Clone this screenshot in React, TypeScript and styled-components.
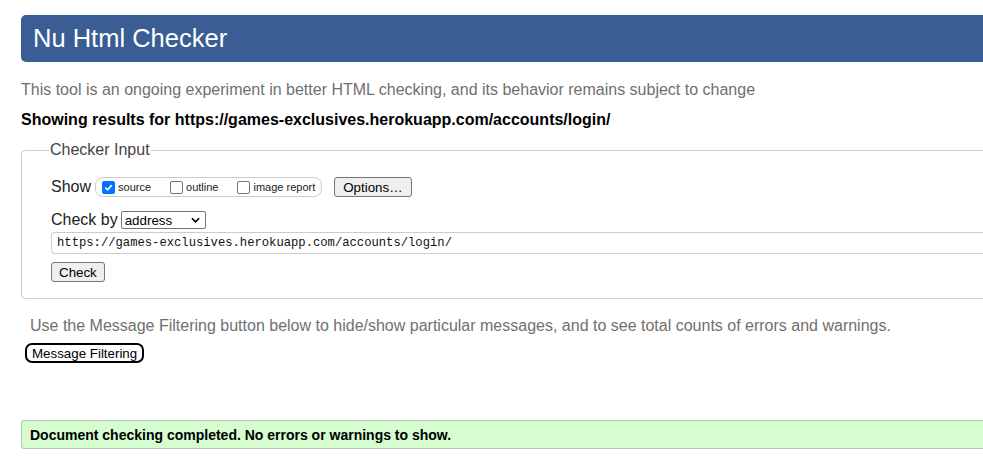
import styled, { createGlobalStyle } from 'styled-components';

const GlobalStyle = createGlobalStyle`
    html, body {
        margin: 0;
        padding: 0;
        background: #ffffff;
        overflow: hidden;
    }
    body {
        font-family: "Liberation Sans", Arial, sans-serif;
        color: #000000;
    }
`;

const Page = styled.main`
    width: 1100px;
    padding: 15px 0 0 21px;
`;

const Header = styled.h1`
    margin: 0;
    height: 47px;
    display: flex;
    align-items: center;
    padding-left: 12px;
    background: #3a5d93;
    border-radius: 5px;
    color: #ffffff;
    font-size: 25.5px;
    font-weight: normal;
`;

const Intro = styled.p`
    margin: 18px 0 0;
    font-size: 16px;
    line-height: 20px;
    color: #707070;
`;

const Results = styled.p`
    margin: 10px 0 0;
    font-size: 16px;
    line-height: 20px;
    font-weight: bold;
`;

const Fieldset = styled.fieldset`
    margin: 11px 0 0;
    padding: 6px 0 16px 29px;
    border: 1px solid #cccccc;
    border-radius: 4px;
    min-width: 0;
`;

const Legend = styled.legend`
    margin-left: -2px;
    padding: 0 1px;
    font-size: 16px;
    color: #444444;
`;

const Row = styled.div<{ $gap?: number; $top?: number; $height: number }>`
    display: flex;
    align-items: center;
    height: ${(p) => p.$height}px;
    gap: ${(p) => p.$gap ?? 4}px;
    margin-top: ${(p) => p.$top ?? 0}px;
`;

const Label = styled.span`
    font-size: 16px;
    color: #222222;
`;

const Group = styled.div`
    display: flex;
    align-items: center;
    height: 18px;
    padding: 0 6px;
    border: 1px solid #cccccc;
    border-radius: 8px;
    margin-left: 1px;
`;

const Option = styled.label`
    display: flex;
    align-items: center;
    font-size: 11px;
    color: #222222;
    margin-right: 19px;
    &:last-child {
        margin-right: 0;
    }
`;

const Box = styled.span<{ $checked?: boolean }>`
    width: 11px;
    height: 11px;
    border: 1px solid ${(p) => (p.$checked ? '#0075ff' : '#767676')};
    background: ${(p) => (p.$checked ? '#0075ff' : '#ffffff')};
    border-radius: 2px;
    margin-right: 3px;
    display: flex;
    align-items: center;
    justify-content: center;
`;

const Button = styled.button`
    display: block;
    font-family: "Liberation Sans", Arial, sans-serif;
    font-size: 13.33px;
    height: 20px;
    padding: 0 7px;
    background: #efefef;
    border: 1px solid #767676;
    border-radius: 3px;
    color: #000000;
`;

const OptionsButton = styled(Button)`
    margin-left: 9px;
    padding: 0 8px;
`;

const Select = styled.div`
    width: 85px;
    height: 18px;
    box-sizing: border-box;
    border: 1px solid #767676;
    border-radius: 2px;
    display: flex;
    align-items: center;
    justify-content: space-between;
    padding: 0 5px 0 3px;
    font-size: 13.33px;
    margin-left: 1px;
`;

const UrlInput = styled.div`
    margin-top: 3px;
    height: 22px;
    box-sizing: border-box;
    border: 1px solid #cccccc;
    border-right: none;
    border-radius: 4px 0 0 4px;
    display: flex;
    align-items: center;
    padding-left: 5px;
    font-family: "Liberation Mono", "DejaVu Sans Mono", monospace;
    font-size: 12.2px;
    color: #111111;
`;

const CheckButton = styled(Button)`
    margin-top: 8px;
`;

const Filter = styled.p`
    margin: 17px 0 0 9px;
    font-size: 16px;
    line-height: 20px;
    color: #707070;
`;

const FilterButton = styled.button`
    display: block;
    margin: 7px 0 0 4px;
    font-family: "Liberation Sans", Arial, sans-serif;
    font-size: 13.33px;
    height: 20px;
    padding: 0 5px;
    background: #ffffff;
    border: 2px solid #000000;
    border-radius: 7px;
    color: #000000;
`;

const Success = styled.p`
    margin: 57px 0 0;
    height: 29px;
    box-sizing: border-box;
    display: flex;
    align-items: center;
    padding-left: 8px;
    background: #d5fdd0;
    border: 1px solid #b8c8b4;
    border-right: none;
    border-radius: 3px 0 0 3px;
    font-size: 14px;
    font-weight: bold;
`;

const Tick = () => (
    <svg width="9" height="9" viewBox="0 0 10 10">
        <path d="M1.5 5.2 L4 7.6 L8.6 2.4" fill="none" stroke="#fff" strokeWidth="1.8" />
    </svg>
);

const Chevron = () => (
    <svg width="9" height="6" viewBox="0 0 10 6">
        <path d="M1 1 L5 5 L9 1" fill="none" stroke="#000" strokeWidth="1.8" />
    </svg>
);

export default function App() {
    return (
        <>
            <GlobalStyle />
            <Page>
                <Header>Nu Html Checker</Header>
                <Intro>
                    This tool is an ongoing experiment in better HTML checking, and its behavior remains subject to change
                </Intro>
                <Results>Showing results for https://games-exclusives.herokuapp.com/accounts/login/</Results>
                <Fieldset>
                    <Legend>Checker Input</Legend>
                    <Row $gap={3} $top={12} $height={20}>
                        <Label>Show</Label>
                        <Group>
                            <Option>
                                <Box $checked>
                                    <Tick />
                                </Box>
                                source
                            </Option>
                            <Option>
                                <Box />
                                outline
                            </Option>
                            <Option>
                                <Box />
                                image report
                            </Option>
                        </Group>
                        <OptionsButton>Options…</OptionsButton>
                    </Row>
                    <Row $gap={2} $top={14} $height={18}>
                        <Label>Check by</Label>
                        <Select>
                            address
                            <Chevron />
                        </Select>
                    </Row>
                    <UrlInput>https://games-exclusives.herokuapp.com/accounts/login/</UrlInput>
                    <CheckButton>Check</CheckButton>
                </Fieldset>
                <Filter>
                    Use the Message Filtering button below to hide/show particular messages, and to see total counts of errors and warnings.
                </Filter>
                <FilterButton>Message Filtering</FilterButton>
                <Success>Document checking completed. No errors or warnings to show.</Success>
            </Page>
        </>
    );
}
